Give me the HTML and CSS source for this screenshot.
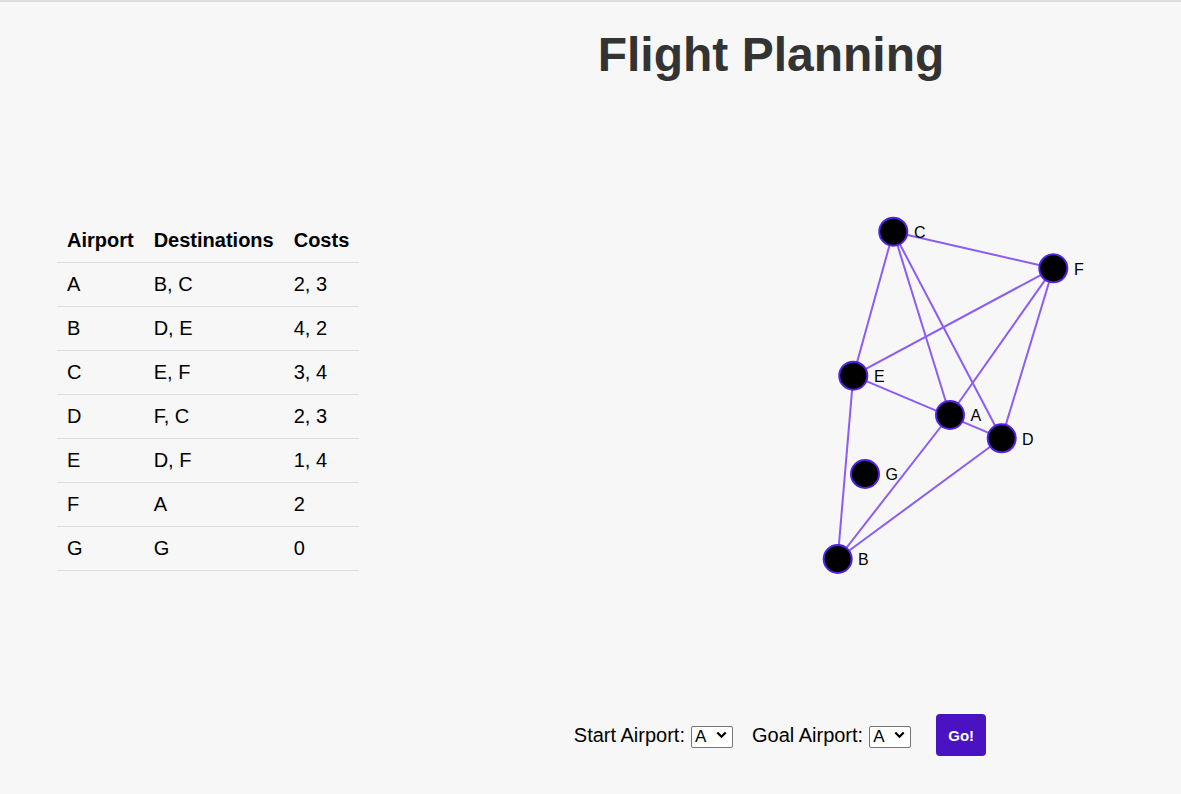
FILE: index.html
```html
<!DOCTYPE html>
<html>
<head>
<meta charset="utf-8">
<title>Flight Planning</title>
<link rel="stylesheet" href="styles.css">
</head>
<body>
<div class="page">
  <div class="left">
    <table class="airports">
      <thead>
        <tr><th>Airport</th><th>Destinations</th><th>Costs</th></tr>
      </thead>
      <tbody>
        <tr><td>A</td><td>B, C</td><td>2, 3</td></tr>
        <tr><td>B</td><td>D, E</td><td>4, 2</td></tr>
        <tr><td>C</td><td>E, F</td><td>3, 4</td></tr>
        <tr><td>D</td><td>F, C</td><td>2, 3</td></tr>
        <tr><td>E</td><td>D, F</td><td>1, 4</td></tr>
        <tr><td>F</td><td>A</td><td>2</td></tr>
        <tr><td>G</td><td>G</td><td>0</td></tr>
      </tbody>
    </table>
  </div>
  <div class="right">
    <h1 class="title">Flight Planning</h1>
    <svg class="graph" width="820" height="600" viewBox="0 0 820 600">
      <g class="edges">
        <line x1="589" y1="315" x2="476.7" y2="459"/>
        <line x1="589" y1="315" x2="532.3" y2="131.7"/>
        <line x1="476.7" y1="459" x2="640.7" y2="338.3"/>
        <line x1="476.7" y1="459" x2="492.3" y2="275.7"/>
        <line x1="532.3" y1="131.7" x2="492.3" y2="275.7"/>
        <line x1="532.3" y1="131.7" x2="692.3" y2="168.3"/>
        <line x1="640.7" y1="338.3" x2="692.3" y2="168.3"/>
        <line x1="640.7" y1="338.3" x2="532.3" y2="131.7"/>
        <line x1="492.3" y1="275.7" x2="640.7" y2="338.3"/>
        <line x1="492.3" y1="275.7" x2="692.3" y2="168.3"/>
        <line x1="692.3" y1="168.3" x2="589" y2="315"/>
      </g>
      <g class="nodes">
        <circle cx="532.3" cy="131.7" r="14"/>
        <circle cx="692.3" cy="168.3" r="14"/>
        <circle cx="492.3" cy="275.7" r="14"/>
        <circle cx="589" cy="315" r="14"/>
        <circle cx="640.7" cy="338.3" r="14"/>
        <circle cx="504" cy="374" r="14"/>
        <circle cx="476.7" cy="459" r="14"/>
      </g>
      <g class="labels">
        <text x="553" y="138">C</text>
        <text x="713" y="174.5">F</text>
        <text x="513" y="282">E</text>
        <text x="609.5" y="321">A</text>
        <text x="661" y="344.5">D</text>
        <text x="524.5" y="380">G</text>
        <text x="497" y="465">B</text>
      </g>
    </svg>
    <div class="controls">
      <label class="field">Start Airport:
        <span class="select-wrap">
          <select class="airport-select">
            <option>A</option><option>B</option><option>C</option><option>D</option><option>E</option><option>F</option><option>G</option>
          </select>
          <svg class="chev" width="11" height="8" viewBox="0 0 11 8"><path d="M1.3 1.5 L5.5 5.7 L9.7 1.5" fill="none" stroke="#000" stroke-width="2.2"/></svg>
        </span>
      </label>
      <label class="field">Goal Airport:
        <span class="select-wrap">
          <select class="airport-select">
            <option>A</option><option>B</option><option>C</option><option>D</option><option>E</option><option>F</option><option>G</option>
          </select>
          <svg class="chev" width="11" height="8" viewBox="0 0 11 8"><path d="M1.3 1.5 L5.5 5.7 L9.7 1.5" fill="none" stroke="#000" stroke-width="2.2"/></svg>
        </span>
      </label>
      <button class="go">Go!</button>
    </div>
  </div>
</div>
</body>
</html>
```

FILE: styles.css
```css
html, body {
  margin: 0;
  padding: 0;
}
body {
  background: #f7f7f7;
  border-top: 2px solid #dedede;
  font-family: "Liberation Sans", Arial, sans-serif;
  color: #000;
}
.page {
  display: flex;
  align-items: flex-start;
}
.left {
  width: 361px;
  flex: none;
  padding-top: 217px;
}
.airports {
  margin-left: 57px;
  border-collapse: collapse;
  font-size: 20px;
}
.airports th,
.airports td {
  text-align: left;
  padding: 10px;
  line-height: 23px;
  border-bottom: 1px solid #dddddd;
}
.airports th {
  font-weight: bold;
}
.right {
  flex: 1;
  display: flex;
  flex-direction: column;
  align-items: center;
}
.title {
  margin: 26px 0 0;
  font-size: 48px;
  line-height: 54px;
  font-weight: bold;
  color: #333333;
}
.graph {
  display: block;
  margin-top: 18px;
}
.edges line {
  stroke: #8b5cf6;
  stroke-width: 2;
}
.nodes circle {
  fill: #000;
  stroke: #5420e8;
  stroke-width: 2;
}
.labels text {
  font-family: "Liberation Sans", Arial, sans-serif;
  font-size: 16px;
  fill: #000;
}
.controls {
  margin-top: 14px;
  display: flex;
  align-items: center;
  padding-left: 18px;
  font-size: 20px;
}
.field {
  display: flex;
  align-items: center;
  gap: 6px;
  margin-right: 19px;
}
.field + .field {
  margin-right: 25px;
}
.select-wrap {
  position: relative;
  display: inline-block;
  width: 42px;
  height: 22px;
}
.airport-select {
  appearance: none;
  -webkit-appearance: none;
  box-sizing: border-box;
  width: 42px;
  height: 22px;
  margin: 0;
  padding: 0 0 0 3px;
  border: 1px solid #767676;
  border-radius: 2px;
  background: #fff;
  font-family: "Liberation Sans", Arial, sans-serif;
  font-size: 17px;
  line-height: 20px;
  color: #000;
}
.chev {
  position: absolute;
  right: 6px;
  top: 7px;
  pointer-events: none;
}
.go {
  width: 50px;
  height: 42px;
  border: none;
  border-radius: 4px;
  background: #4a12c2;
  color: #fff;
  font-family: "Liberation Sans", Arial, sans-serif;
  font-weight: bold;
  font-size: 15px;
  padding: 0;
}
```
